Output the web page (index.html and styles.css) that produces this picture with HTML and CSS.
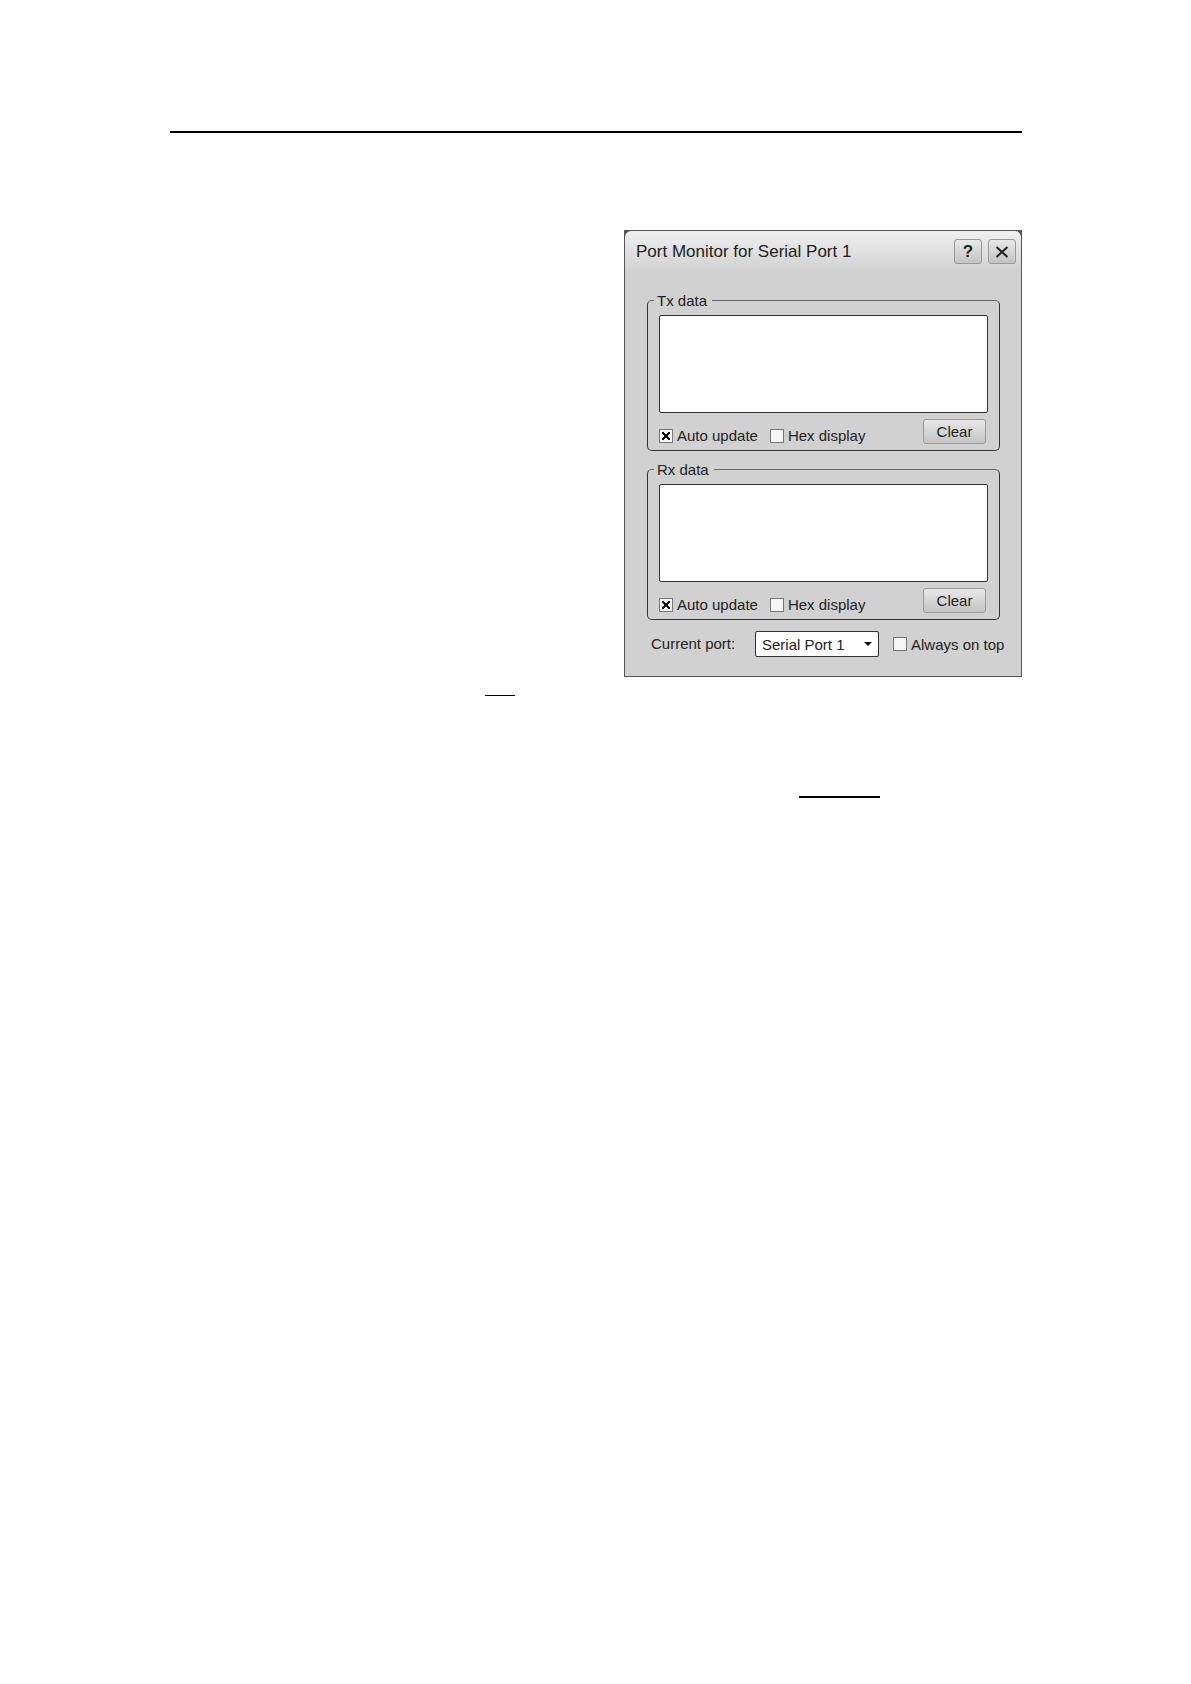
FILE: index.html
```html
<!DOCTYPE html>
<html lang="en">
<head>
<meta charset="utf-8">
<title>Port Monitor for Serial Port 1</title>
<link rel="stylesheet" href="styles.css">
</head>
<body>
<main class="page">
  <hr class="rule">
  <section class="dialog" aria-labelledby="dialog-title">
    <div class="dialog-inner">
      <header class="titlebar">
        <h1 class="title" id="dialog-title">Port Monitor for Serial Port 1</h1>
        <button class="button icon-button" type="button" aria-label="Help">?</button>
        <button class="button icon-button" type="button" aria-label="Close">
          <svg width="14" height="14" viewBox="0 0 14 14" aria-hidden="true"><path d="M1.5 2L12.500 12M12.500 2L1.500 12" stroke="#222" stroke-width="2" fill="none"/></svg>
        </button>
      </header>
      <form class="content">
        <fieldset class="group">
          <legend class="legend">Tx data</legend>
          <textarea class="log" aria-label="Tx data"></textarea>
          <div class="options">
            <label class="check"><input class="box" type="checkbox" checked>Auto update</label>
            <label class="check"><input class="box" type="checkbox">Hex display</label>
            <button class="button clear" type="button">Clear</button>
          </div>
        </fieldset>
        <fieldset class="group">
          <legend class="legend">Rx data</legend>
          <textarea class="log" aria-label="Rx data"></textarea>
          <div class="options">
            <label class="check"><input class="box" type="checkbox" checked>Auto update</label>
            <label class="check"><input class="box" type="checkbox">Hex display</label>
            <button class="button clear" type="button">Clear</button>
          </div>
        </fieldset>
        <div class="footer">
          <label class="port-label" for="port">Current port:</label>
          <select class="port" id="port"><option>Serial Port 1</option></select>
          <label class="check"><input class="box" type="checkbox">Always on top</label>
        </div>
      </form>
    </div>
  </section>
  <hr class="rule short-rule">
  <hr class="rule long-rule">
</main>
</body>
</html>
```
FILE: styles.css
```css
* {
  box-sizing: border-box;
}

body {
  margin: 0;
  background: #fff;
  color: #222;
  font: 15px/17px "Liberation Sans", Arial, sans-serif;
}

.page {
  padding: 131px 169px 0 170px;
}

.rule {
  height: 2px;
  margin: 0;
  border: 0;
  background: #000;
}

.short-rule {
  width: 30px;
  height: 1px;
  margin: 18px 0 100px 37%;
}

.long-rule {
  width: 81px;
  margin: 0 142px 0 auto;
}

.dialog {
  width: 398px;
  max-width: 100%;
  margin: 97px 0 0 auto;
  border: 1px solid #555;
  background: #555;
}

.dialog-inner {
  border-radius: 6px 6px 0 0;
  background: linear-gradient(#f0f0f0, #e2e2e2 18px, #d1d1d1 40px);
}

.titlebar {
  display: flex;
  align-items: center;
  gap: 6px;
  padding: 8px 5px 0 11px;
}

.title {
  flex: 1;
  margin: 0;
  font-size: 17px;
  font-weight: 400;
  line-height: 24px;
}

.button {
  display: flex;
  align-items: center;
  justify-content: center;
  height: 25px;
  padding: 0;
  border: 1px solid #999;
  border-radius: 3px;
  background: linear-gradient(#e8e8e8, #c4c4c4);
  color: #222;
  font: inherit;
}

.icon-button {
  width: 28px;
  font-size: 17px;
  font-weight: 700;
}

.content {
  padding: 29px 13px 19px 22px;
}

.group {
  min-width: 0;
  margin: 0 8px 11px 0;
  padding: 7px 11px 6px;
  border: 1px solid #333;
  border-top-color: #666;
  border-radius: 5px;
}

.legend {
  margin-left: -5px;
  padding: 0 5px 0 3px;
  line-height: 15px;
}

.log {
  display: block;
  width: 100%;
  height: 98px;
  border: 1px solid #333;
  border-radius: 2px;
  background: #fff;
  font: inherit;
  resize: none;
}

.options {
  display: flex;
  gap: 12px;
  align-items: flex-end;
  margin-top: 6px;
}

.check {
  display: flex;
  align-items: center;
  gap: 4px;
  white-space: nowrap;
}

.box {
  appearance: none;
  width: 14px;
  height: 14px;
  margin: 0;
  border: 1px solid #777;
  background: #f6f6f6;
}

.box:checked {
  background:
    linear-gradient(45deg, transparent 40%, #111 40%, #111 60%, transparent 60%) center / 8px 8px no-repeat,
    linear-gradient(-45deg, transparent 40%, #111 40%, #111 60%, transparent 60%) center / 8px 8px no-repeat,
    #f6f6f6;
}

.clear {
  width: 63px;
  margin: 0 2px 0 auto;
}

.footer {
  display: flex;
  align-items: center;
  padding-left: 4px;
}

.port-label {
  flex: none;
  width: 104px;
  padding-bottom: 2px;
}

.port {
  appearance: none;
  width: 124px;
  height: 26px;
  margin: 0 14px 0 0;
  padding: 0 6px;
  border: 1px solid #333;
  border-radius: 2px;
  background: url("data:image/svg+xml,%3Csvg xmlns='http://www.w3.org/2000/svg' width='8' height='4'%3E%3Cpath d='M0 0H8L4 4Z' fill='%23111'/%3E%3C/svg%3E") right 6px center no-repeat, #fff;
  color: #222;
  font: inherit;
}
```
